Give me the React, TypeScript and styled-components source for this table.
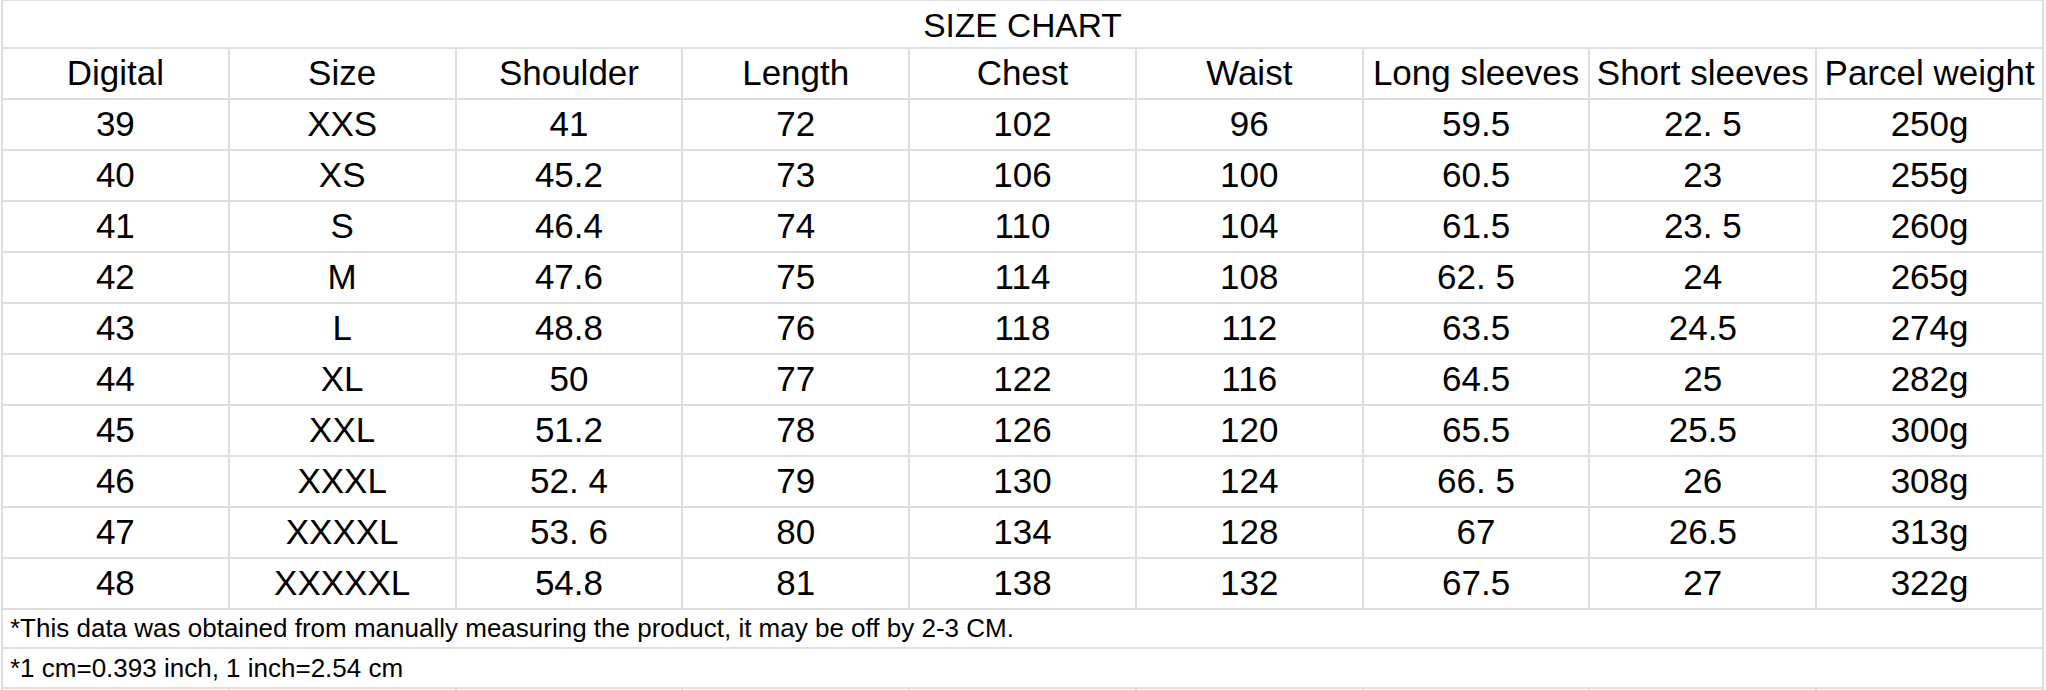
import styled, { createGlobalStyle } from 'styled-components';

const GlobalStyle = createGlobalStyle`
  html, body {
    margin: 0;
    padding: 0;
    background: #ffffff;
  }
  body {
    font-family: "Liberation Sans", Arial, sans-serif;
    color: #000000;
    overflow: hidden;
  }
`;

const Sheet = styled.div`
  margin-left: 1px;
  width: 2043px;
  height: 690px;
  overflow: hidden;
`;

// spreadsheet grid: the gray background shows through the 2px gaps as cell borders
const Grid = styled.div`
  display: grid;
  grid-template-columns: repeat(9, 1fr);
  grid-template-rows: 46px repeat(11, 49px) 37px 38px 49px;
  gap: 2px;
  padding: 1px 2px 2px;
  background: #dedede;
`;

const TitleCell = styled.div`
  grid-column: 1 / -1;
  background: #ffffff;
  display: flex;
  align-items: center;
  justify-content: center;
  font-size: 33.5px;
  padding-top: 3px;
  box-sizing: border-box;
`;

const Cell = styled.div`
  background: #ffffff;
  display: flex;
  align-items: center;
  justify-content: center;
  font-size: 35px;
  white-space: nowrap;
  overflow: hidden;
  padding-bottom: 2px;
  box-sizing: border-box;
`;

const NoteCell = styled.div`
  grid-column: 1 / -1;
  background: #ffffff;
  display: flex;
  align-items: center;
  padding-left: 7px;
  font-size: 26px;
  white-space: nowrap;
`;

const BlankCell = styled.div`
  background: #ffffff;
`;

const headers = [
  'Digital',
  'Size',
  'Shoulder',
  'Length',
  'Chest',
  'Waist',
  'Long sleeves',
  'Short sleeves',
  'Parcel weight',
];

const rows: string[][] = [
  ['39', 'XXS', '41', '72', '102', '96', '59.5', '22. 5', '250g'],
  ['40', 'XS', '45.2', '73', '106', '100', '60.5', '23', '255g'],
  ['41', 'S', '46.4', '74', '110', '104', '61.5', '23. 5', '260g'],
  ['42', 'M', '47.6', '75', '114', '108', '62. 5', '24', '265g'],
  ['43', 'L', '48.8', '76', '118', '112', '63.5', '24.5', '274g'],
  ['44', 'XL', '50', '77', '122', '116', '64.5', '25', '282g'],
  ['45', 'XXL', '51.2', '78', '126', '120', '65.5', '25.5', '300g'],
  ['46', 'XXXL', '52. 4', '79', '130', '124', '66. 5', '26', '308g'],
  ['47', 'XXXXL', '53. 6', '80', '134', '128', '67', '26.5', '313g'],
  ['48', 'XXXXXL', '54.8', '81', '138', '132', '67.5', '27', '322g'],
];

const SizeChart = () => {
  return (
    <Sheet>
      <Grid>
        <TitleCell>SIZE CHART</TitleCell>
        {headers.map((h) => (
          <Cell key={h}>{h}</Cell>
        ))}
        {rows.map((r, i) =>
          r.map((v, j) => <Cell key={`${i}-${j}`}>{v}</Cell>)
        )}
        <NoteCell>
          *This data was obtained from manually measuring the product, it may be off by 2-3 CM.
        </NoteCell>
        <NoteCell>*1 cm=0.393 inch, 1 inch=2.54 cm</NoteCell>
        {headers.map((h) => (
          <BlankCell key={`blank-${h}`} />
        ))}
      </Grid>
    </Sheet>
  );
};

export default function App() {
  return (
    <>
      <GlobalStyle />
      <SizeChart />
    </>
  );
}
